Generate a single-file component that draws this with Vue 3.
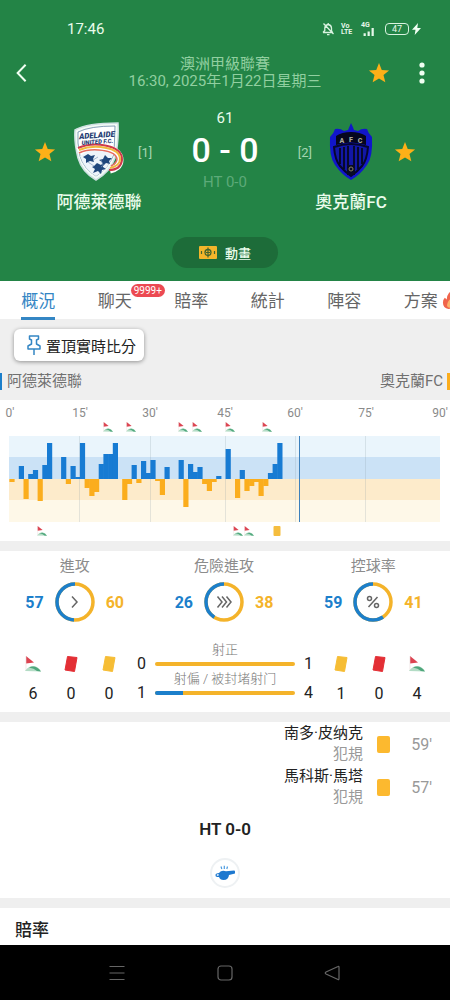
<script setup>
const starPath = 'M12 1.2 15 8.6 23 9.2 16.9 14.3 18.9 22.2 12 17.9 5.1 22.2 7.1 14.3 1 9.2 9 8.6Z'

const tabs = [
  { label: '概況', active: true },
  { label: '聊天', badge: '9999+' },
  { label: '賠率' },
  { label: '統計' },
  { label: '陣容' },
  { label: '方案', hot: true }
]

const plotWidth = 431
const step = 4.7

const ticks = [
  { label: "0'", x: 1 },
  { label: "15'", x: 71 },
  { label: "30'", x: 141 },
  { label: "45'", x: 216 },
  { label: "60'", x: 286 },
  { label: "75'", x: 357 },
  { label: "90'", x: 431 }
]

// Momentum per minute: positive for the home side, negative for the away side.
const momentum = {
  0: -3, 2: 13, 3: -20, 4: 5, 5: 9, 6: -22, 7: 14, 8: 36, 11: 22, 12: -5, 13: 13, 14: 2,
  15: 36, 16: -9, 17: -17, 18: -13, 19: 15, 20: 25, 21: 25, 22: 36, 24: -21, 25: -5,
  26: 14, 27: -4, 28: 18, 29: 6, 30: 19, 31: -2, 32: -16, 33: 12, 36: 19, 37: -28,
  38: 15, 39: 7, 40: 12, 41: -5, 42: -12, 43: -3, 44: 3, 46: 30, 48: -19, 49: 9,
  50: -12, 51: -7, 52: -3, 53: -17, 54: -7, 55: 6, 56: 15, 57: 36
}
const bars = Object.entries(momentum).map(([minute, value]) => ({
  x: Number(minute) * step + 0.4,
  y: value > 0 ? 43 - value : 43,
  h: Math.abs(value),
  home: value > 0
}))

const homeEvents = [99, 122, 174, 188, 221, 258]
const awayEvents = [
  { type: 'corner', x: 33 },
  { type: 'corner', x: 229 },
  { type: 'corner', x: 240 },
  { type: 'yellow', x: 268 }
]
const at = (x) => ({ left: (x / plotWidth) * 100 + '%' })

const circumference = 2 * Math.PI * 18
const rings = [
  { label: '進攻', home: 57, away: 60, icon: 'M17 14.5 22 20 17 25.5' },
  { label: '危險進攻', home: 26, away: 38, icon: 'M13.5 14.5 18 20 13.5 25.5M18 14.5 22.5 20 18 25.5M22.5 14.5 27 20 22.5 25.5' },
  { label: '控球率', home: 59, away: 41, icon: 'M24.5 15 15.5 25M18.5 16.5a2 2 0 1 1-4 0a2 2 0 1 1 4 0M25.5 23.5a2 2 0 1 1-4 0a2 2 0 1 1 4 0' }
]
const homeArc = (r) => (r.home / (r.home + r.away)) * circumference

const homeCounts = [
  { type: 'corner', name: '角球', n: 6 },
  { type: 'red', name: '紅牌', n: 0 },
  { type: 'yellow', name: '黃牌', n: 0 }
]
const awayCounts = [
  { type: 'yellow', name: '黃牌', n: 1 },
  { type: 'red', name: '紅牌', n: 0 },
  { type: 'corner', name: '角球', n: 4 }
]
const shots = [
  { label: '射正', home: 0, away: 1 },
  { label: '射偏 / 被封堵射门', home: 1, away: 4 }
]
const share = (s) => ({ width: (s.home / (s.home + s.away)) * 100 + '%' })

const incidents = [
  { player: '南多·皮纳克', reason: '犯規', minute: "59'" },
  { player: '馬科斯·馬塔', reason: '犯規', minute: "57'" }
]
</script>

<template>
  <div class="screen">
    <svg class="defs" aria-hidden="true">
      <symbol id="corner" viewBox="0 0 16 16">
        <path d="M1 0 9 6.5 1 7.5Z" fill="#dc4350" />
        <path d="M1 0v15" stroke="#e9d9d9" stroke-width=".6" />
        <path d="M0 15Q4 9.500 9 10Q14 11 16 15.500Z" fill="#b3dcc5" />
        <path d="M4 11.500Q11 8.500 16 15.500L12 15Q9 12 4 11.500Z" fill="#4fa77c" />
      </symbol>
      <symbol id="red" viewBox="0 0 16 16">
        <path d="M4.500.500 14 1.500 11.500 15.500 2 14Z" fill="#e32f35" stroke="#e32f35" stroke-linejoin="round" />
      </symbol>
      <symbol id="yellow" viewBox="0 0 16 16">
        <path d="M4.500.500 14 1.500 11.500 15.500 2 14Z" fill="#f6bd35" stroke="#f6bd35" stroke-linejoin="round" />
      </symbol>
    </svg>

    <header class="hero">
      <div class="status">
        <time>17:46</time>
        <div class="status-icons">
          <svg class="bell" viewBox="0 0 12 14" fill="none" stroke="#d9f3e0" stroke-width="1.3">
            <path d="M1 10.500h9.500L9.500 8.500V6Q9.300 3 6.200 2.500Q3 3 2.800 6V8.500L1 10.500M5 12.600h2.500M1.500 1.500 11.500 12M6.200 1v1.500" />
          </svg>
          <span class="volte"><b>Vo</b><b>LTE</b></span>
          <span class="signal">
            <b>4G</b>
            <svg viewBox="0 0 14 9" fill="#e6f7ea"><path d="M2 6h2.500v3H2zM6.500 4H9v5H6.500zM11 0h2.500v9H11z" /></svg>
          </span>
          <span class="battery">47</span>
          <svg class="bolt" viewBox="0 0 9 12" fill="#f2fff4"><path d="M6 0 0 6.800h3.500L2.700 12 9 5H5.300Z" /></svg>
        </div>
      </div>

      <div class="topbar">
        <button class="icon-btn back" aria-label="返回">
          <svg viewBox="0 0 12 20" fill="none" stroke="#f0fff2" stroke-width="2.2"><path d="M10.500 1 1.800 10 10.500 19" /></svg>
        </button>
        <div class="league">
          <div>澳洲甲級聯賽</div>
          <div>16:30, 2025年1月22日星期三</div>
        </div>
        <div class="actions">
          <button class="icon-btn" aria-label="收藏比賽"><svg class="star" viewBox="0 0 24 24"><path :d="starPath" /></svg></button>
          <button class="icon-btn" aria-label="更多">
            <svg class="dots" viewBox="0 0 6 22" fill="#f0fff2"><circle cx="3" cy="3" r="2.600" /><circle cx="3" cy="11" r="2.600" /><circle cx="3" cy="19" r="2.600" /></svg>
          </button>
        </div>
      </div>

      <div class="match">
        <div class="team">
          <div class="crest-row">
            <button class="icon-btn" aria-label="收藏阿德萊德聯"><svg class="star" viewBox="0 0 24 24"><path :d="starPath" /></svg></button>
            <svg class="crest" viewBox="0 0 50 60">
              <path d="M1 8Q13 1 44 1Q45 20 41 36Q36 50 22 58Q8 50 4 36Q0 20 1 8Z" fill="#f3faf6" stroke="#cfe0e2" stroke-width="1.500" />
              <path d="M4 10Q16 4 41 4L40 32Q34 47 22 54Q10 47 6 34Q3 20 4 10Z" fill="#fff" stroke="#55799b" stroke-width=".7" />
              <path d="M6 34Q22 22 39 33Q34 48 22 54Q11 48 6 34Z" fill="#eef4fa" />
              <path d="m20 44 3-3 4 2 2-2 0 4 3 2-4 1-1 4-3-3-5 2 2-4-3-2Z M9 35l5-3 3 2 4-1-2 4 1 3-4-1-4 2 0-4ZM31 33l3 3 4 0-3 3 1 3-4-1-3 3-1-4-3-2 4-1Z" fill="#20477c" />
              <path d="M14 40l6 4M24 35l-5 3M27 38l2 5M31 42l-4 3" stroke="#809ab9" stroke-width=".7" />
              <path d="M4 29C18 21 46 24 46 38C46 44 41 47 36 48" fill="none" stroke="#fff" stroke-width="7" />
              <path d="M4 26C20 19 49 23 48 38C47 45 42 48 35 48" fill="none" stroke="#cf3a4a" stroke-width="2" />
              <path d="M5 28C20 22 46 25 46 37C46 42 41 45 36 46" fill="none" stroke="#f0b83d" stroke-width="2" />
              <path d="M5 31C18 25 42 28 43 37C43 41 39 43 37 44" fill="none" stroke="#e66b5f" stroke-width="1.500" />
              <g transform="rotate(-4 22 15)" fill="#263d73" font-family="Roboto, sans-serif" font-weight="900" font-style="italic" text-anchor="middle">
                <text x="23" y="16" font-size="8">ADELAIDE</text>
                <text x="23" y="22" font-size="6">UNITED F.C.</text>
              </g>
            </svg>
            <span class="rank">[1]</span>
          </div>
          <div class="team-name">阿德萊德聯</div>
        </div>

        <div class="score-col">
          <div class="minute">61</div>
          <div class="score">0 - 0</div>
          <div class="half">HT 0-0</div>
        </div>

        <div class="team">
          <div class="crest-row">
            <span class="rank">[2]</span>
            <svg class="crest" viewBox="0 0 50 60">
              <path d="M25 1Q27 5 28 8L32 9Q36 6 41 7Q42 11 46 15Q47 35 41 43Q34 53 25 58Q16 53 9 43Q3 35 4 15Q8 11 9 7Q14 6 18 9L22 8Z" fill="#1116ca" />
              <path d="M25 10Q34 10 40 14L40 23Q25 18 10 23L10 14Q16 10 25 10Z" fill="#05061e" />
              <path d="M8 25Q25 19 42 25Q41 38 36 44Q31 50 25 54Q19 50 14 44Q9 38 8 25Z" fill="#1217a6" stroke="#05062e" stroke-width="2" />
              <path d="M14 26v16M18 25v22M22 24v24M28 24v24M32 25v22M36 26v16" stroke="#060822" stroke-width="1.800" />
              <path d="M21 43h8v10h-8z" fill="#090b26" />
              <circle cx="25" cy="47" r="2" fill="none" stroke="#8a825d" />
              <g text-anchor="middle" font-size="7" font-weight="900" font-family="Roboto, sans-serif" fill="#aaa89a">
                <text x="16" y="21">A</text>
                <text x="25" y="20">F</text>
                <text x="34" y="21">C</text>
              </g>
            </svg>
            <button class="icon-btn" aria-label="收藏奧克蘭FC"><svg class="star" viewBox="0 0 24 24"><path :d="starPath" /></svg></button>
          </div>
          <div class="team-name">奧克蘭FC</div>
        </div>
      </div>

      <button class="animate">
        <svg viewBox="0 0 18 13">
          <rect width="18" height="13" rx="1" fill="#f3b52b" />
          <circle cx="9" cy="6.500" r="3" fill="none" stroke="#43652e" stroke-width="1.300" />
          <path d="M9 1.500v10M2.500 5v3M15.500 5v3M7 6.500h4" stroke="#43652e" stroke-width="1.200" />
        </svg>
        <span>動畫</span>
      </button>
    </header>

    <nav class="tabs">
      <button v-for="t in tabs" :key="t.label" class="tab" :class="{ active: t.active }">
        <span class="tab-label">{{ t.label }}
          <span v-if="t.badge" class="badge">{{ t.badge }}</span>
          <svg v-if="t.hot" class="flame" viewBox="0 0 16 18">
            <path d="M8 0Q10 4 13 6Q16 11 13 15Q11 18 7 18Q1 17 1 11Q1 8 3 6L5 8Q5 4 8 0Z" fill="#f0644b" />
            <path d="M8 8Q12 12 11 15Q9 18 6 16Q4 13 8 8Z" fill="#fbb36b" />
          </svg>
        </span>
      </button>
    </nav>

    <main>
      <section class="pin-area">
        <button class="pin">
          <svg viewBox="0 0 14 20" fill="none" stroke="#3486c4" stroke-width="1.500" stroke-linejoin="round">
            <path d="M2.500 1h9v3L9.500 5v4l3.500 2v3H1v-3l3.500-2V5l-2-1ZM7 14v6" />
          </svg>
          <span>置頂實時比分</span>
        </button>
        <div class="legend">
          <span class="home">阿德萊德聯</span>
          <span class="away">奧克蘭FC</span>
        </div>
      </section>

      <section class="chart">
        <div class="axis"><span v-for="t in ticks" :key="t.label" :style="at(t.x)">{{ t.label }}</span></div>
        <div class="marks">
          <svg v-for="x in homeEvents" :key="x" viewBox="0 0 16 16" :style="at(x)"><use href="#corner" /></svg>
        </div>
        <svg class="plot" :viewBox="`0 0 ${plotWidth} 86`" preserveAspectRatio="none">
          <path d="M0 0h431v21H0z" fill="#eaf5fc" />
          <path d="M0 21h431v22H0z" fill="#cbe2f6" />
          <path d="M0 43h431v21H0z" fill="#fdebcb" />
          <path d="M0 64h431v22H0z" fill="#fef8e8" />
          <path d="M70.500 0v86M141.500 0v86M216.500 0v86M286.500 0v86M356.500 0v86" stroke="#8a9aa5" stroke-opacity=".22" />
          <rect v-for="b in bars" :key="b.x" :x="b.x" :y="b.y" width="5.2" :height="b.h" :fill="b.home ? '#177bd3' : '#fbad1d'" />
          <path d="M290 0h1v86h-1z" fill="#3b80bd" />
        </svg>
        <div class="marks low">
          <template v-for="e in awayEvents" :key="e.x">
            <svg v-if="e.type === 'corner'" viewBox="0 0 16 16" :style="at(e.x)"><use href="#corner" /></svg>
            <i v-else :style="at(e.x)"></i>
          </template>
        </div>
      </section>

      <section class="stats">
        <div class="rings">
          <div v-for="r in rings" :key="r.label" class="ring">
            <div class="ring-label">{{ r.label }}</div>
            <div class="ring-row">
              <b class="home-n">{{ r.home }}</b>
              <svg viewBox="0 0 40 40" fill="none">
                <circle cx="20" cy="20" r="18" stroke="#f4b32a" stroke-width="3.500" />
                <circle cx="20" cy="20" r="18" stroke="#1c7fcb" stroke-width="3.500" transform="matrix(0 -1 -1 0 40 40)" :stroke-dasharray="`${homeArc(r)} ${circumference}`" />
                <path :d="r.icon" stroke="#666" stroke-width="1.500" />
              </svg>
              <b class="away-n">{{ r.away }}</b>
            </div>
          </div>
        </div>

        <div class="totals">
          <div class="counts">
            <div v-for="c in homeCounts" :key="c.type"><svg viewBox="0 0 16 16" role="img" :aria-label="c.name"><use :href="'#' + c.type" /></svg><span>{{ c.n }}</span></div>
          </div>
          <div class="shots">
            <div v-for="s in shots" :key="s.label" class="shot">
              <span class="shot-n">{{ s.home }}</span>
              <div class="shot-mid">
                <span>{{ s.label }}</span>
                <div class="track"><div class="fill" :style="share(s)"></div></div>
              </div>
              <span class="shot-n">{{ s.away }}</span>
            </div>
          </div>
          <div class="counts">
            <div v-for="c in awayCounts" :key="c.type"><svg viewBox="0 0 16 16" role="img" :aria-label="c.name"><use :href="'#' + c.type" /></svg><span>{{ c.n }}</span></div>
          </div>
        </div>
      </section>

      <section class="incidents">
        <div v-for="i in incidents" :key="i.minute" class="incident">
          <div class="who"><div>{{ i.player }}</div><div class="why">{{ i.reason }}</div></div>
          <i class="card"></i>
          <span class="when">{{ i.minute }}</span>
        </div>
        <div class="ht">HT 0-0</div>
        <div class="whistle">
          <svg viewBox="0 0 20 16">
            <path d="M5.500 6.500Q8 5 11 6.200L19 5.500Q20 5.500 20 6.500V8.500L14 10Q13.500 15 8.500 15Q5 15 4 12H2Q0 11.500.500 9.500Q1 8 4 8Z" fill="#1d78cf" />
            <path d="M3.800 9.300H2Q1.400 10.200 2 10.800h1.500Z" fill="#fff" />
            <path d="M6 1.500 6.800 4M9.300.800V4M12.500 1.500 11.800 4" stroke="#4c9be0" stroke-width="1.200" />
          </svg>
        </div>
      </section>

      <section class="odds"><h2>賠率</h2></section>
    </main>

    <footer class="sysnav">
      <button class="icon-btn" aria-label="最近"><svg viewBox="0 0 18 18"><path d="M1.500 2.500h15M1.500 9h15M1.500 15.500h15" /></svg></button>
      <button class="icon-btn" aria-label="主頁"><svg viewBox="0 0 18 18"><rect x="2" y="2" width="14" height="14" rx="3" /></svg></button>
      <button class="icon-btn" aria-label="返回"><svg viewBox="0 0 18 18"><path d="M14 2.500Q15 2 15 3.500v11Q15 16 14 15.500L2 10Q.500 9 2 8Z" /></svg></button>
    </footer>
  </div>
</template>

<style>
body {
  background: #fff;
}
</style>

<style scoped>
.screen {
  display: flex;
  flex-direction: column;
  min-height: 100vh;
  overflow: hidden;
  font-family: Roboto, "Noto Sans CJK TC", sans-serif;
  font-size: 15px;
  color: #222;
}
.screen * {
  box-sizing: border-box;
}
button {
  margin: 0;
  padding: 0;
  border: 0;
  background: none;
  font: inherit;
  color: inherit;
}
svg {
  display: block;
  flex: none;
}
.defs {
  position: absolute;
  width: 0;
  height: 0;
}
.icon-btn {
  display: flex;
}

.hero {
  display: flex;
  flex-direction: column;
  padding-bottom: 13px;
  background: #238446;
  color: #eafcec;
}
.status {
  display: flex;
  align-items: center;
  justify-content: space-between;
  height: 54px;
  padding: 4px 29px 0 67px;
}
.status-icons {
  display: flex;
  align-items: center;
  color: #e6f7ea;
}
.bell {
  width: 12px;
  height: 14px;
  margin-right: 7px;
}
.volte {
  display: flex;
  flex-direction: column;
  width: 10px;
  margin-right: 10px;
  font-size: 7px;
  line-height: 6px;
}
.signal {
  display: flex;
  flex-direction: column;
  height: 13px;
  margin-right: 10px;
  font-size: 7px;
  line-height: 5px;
}
.signal svg {
  width: 14px;
  height: 8px;
}
.battery {
  width: 24px;
  height: 12px;
  margin-right: 3px;
  border: 1px solid #d9f3e0;
  border-radius: 4px;
  font-size: 9px;
  line-height: 10px;
  text-align: center;
}
.bolt {
  width: 9px;
  height: 12px;
}

.topbar {
  display: grid;
  grid-template-columns: 80px 1fr 71px;
  align-items: center;
  height: 37px;
  padding: 0 25px 0 16px;
}
.back svg {
  width: 11px;
  height: 20px;
}
.league {
  color: #91cfa0;
  line-height: 17px;
  text-align: center;
  white-space: nowrap;
}
.actions {
  display: flex;
  align-items: center;
  justify-content: flex-end;
  gap: 29px;
}
.star {
  width: 22px;
  height: 22px;
  fill: #fdb018;
}
.dots {
  width: 6px;
  height: 22px;
}

.match {
  display: grid;
  grid-template-columns: 130px 1fr 130px;
  padding: 17px 34px 0;
}
.team {
  display: flex;
  flex-direction: column;
  align-items: stretch;
  padding-top: 14px;
}
.crest-row {
  display: grid;
  grid-template-columns: 1fr auto 1fr;
  align-items: center;
  column-gap: 14px;
}
.crest {
  width: 50px;
  height: 60px;
}
.rank {
  font-size: 13px;
  color: #a5d5b1;
}
.team:last-child .rank {
  text-align: right;
}
.team:last-child .icon-btn {
  justify-content: flex-end;
}
.team-name {
  margin-top: 8px;
  font-size: 17px;
  line-height: 24px;
  font-weight: 500;
  text-align: center;
  white-space: nowrap;
}
.score-col {
  text-align: center;
  white-space: nowrap;
}
.minute {
  line-height: 20px;
}
.score {
  font-size: 34px;
  font-weight: 500;
  line-height: 44px;
  color: #fff;
}
.half {
  line-height: 20px;
  color: #5daa79;
}
.animate {
  display: flex;
  align-items: center;
  justify-content: center;
  align-self: center;
  gap: 8px;
  width: 106px;
  height: 31px;
  margin-top: 23px;
  border-radius: 16px;
  background: #1d6c39;
  font-size: 13px;
  font-weight: 500;
}
.animate svg {
  width: 18px;
  height: 13px;
}

.tabs {
  display: flex;
  height: 38px;
  background: #fff;
  color: #666;
}
.tab {
  display: flex;
  justify-content: center;
  flex: 0 0 17%;
  font-size: 17px;
}
.tab-label {
  position: relative;
  height: 39px;
  padding: 0;
  line-height: 41px;
  white-space: nowrap;
}
.tab.active {
  color: #3486c4;
}
.tab.active .tab-label {
  border-bottom: 3px solid #3486c4;
}
.badge {
  position: absolute;
  left: 33px;
  top: 3px;
  padding: 0 3px;
  border-radius: 7px;
  background: #ec4a52;
  color: #fff;
  font-size: 10px;
  line-height: 13px;
}
.flame {
  position: absolute;
  left: 38px;
  top: 11px;
  width: 15px;
  height: 17px;
}

.pin-area {
  padding-top: 10px;
  background: #efefef;
}
.pin {
  display: flex;
  align-items: center;
  gap: 5px;
  height: 32px;
  margin-left: 14px;
  padding: 0 8px 0 13px;
  border-radius: 6px;
  background: #fff;
  box-shadow: 0 1px 4px rgba(0, 0, 0, 0.4);
}
.pin svg {
  width: 14px;
  height: 20px;
}
.legend {
  display: flex;
  justify-content: space-between;
  padding: 12px 0 10px;
  line-height: 17px;
  color: #707070;
}
.legend .home {
  padding-left: 5px;
  border-left: 2px solid #1c7fcb;
}
.legend .away {
  padding-right: 4px;
  border-right: 3px solid #fbad1d;
}

.chart {
  padding: 5px 10px 0 9px;
  border-bottom: 10px solid #efefef;
}
.axis {
  position: relative;
  height: 16px;
  font-size: 12px;
  line-height: 16px;
  color: #8a8a8a;
}
.axis span {
  position: absolute;
  transform: translateX(-50%);
}
.marks {
  position: relative;
  height: 15px;
}
.marks.low {
  height: 19px;
}
.marks svg,
.marks i {
  position: absolute;
  top: 1px;
  width: 10px;
  height: 10px;
  transform: translateX(-50%);
}
.marks.low svg,
.marks.low i {
  top: 4px;
}
.marks i {
  width: 7px;
  border-radius: 1px;
  background: #f5bd3e;
}
.plot {
  width: 100%;
  height: 86px;
}

.stats {
  padding: 5px 0 8px;
  border-bottom: 10px solid #efefef;
}
.rings {
  display: grid;
  grid-template-columns: repeat(3, 1fr);
  padding-right: 2px;
}
.ring-label {
  line-height: 20px;
  text-align: center;
  color: #8c8c8c;
}
.ring-row {
  display: flex;
  align-items: center;
  justify-content: center;
  gap: 11px;
  margin-top: 6px;
  font-size: 16px;
}
.ring-row svg {
  width: 40px;
  height: 40px;
}
.home-n {
  color: #1c7fcb;
}
.away-n {
  color: #f4b32a;
}
.totals {
  display: grid;
  grid-template-columns: 114px 1fr 114px;
  margin-top: 18px;
  padding: 0 14px;
  font-size: 16px;
}
.counts {
  display: grid;
  grid-template-columns: repeat(3, 1fr);
  padding-top: 16px;
}
.counts div {
  display: flex;
  flex-direction: column;
  align-items: center;
  gap: 12px;
  line-height: 20px;
}
.counts svg {
  width: 16px;
  height: 16px;
}
.shot {
  display: grid;
  grid-template-columns: 27px 1fr 27px;
  align-items: end;
  height: 29px;
}
.shots .shot:first-child {
  height: 30px;
}
.shot-n {
  line-height: 12px;
  text-align: center;
}
.shot-mid {
  padding-bottom: 4px;
  font-size: 13px;
  font-weight: 300;
  line-height: 18px;
  text-align: center;
  white-space: nowrap;
  color: #777;
}
.shot-mid span {
  display: block;
  margin-bottom: 3px;
}
.track {
  height: 4px;
  overflow: hidden;
  border-radius: 2px;
  background: #f4b32a;
}
.fill {
  height: 4px;
  background: #1c7fcb;
}

.incidents {
  padding: 1px 0 10px;
  border-bottom: 10px solid #efefef;
}
.incident {
  display: flex;
  align-items: center;
  justify-content: flex-end;
  padding-right: 18px;
}
.who {
  margin-right: 14px;
  line-height: 21px;
  text-align: right;
}
.incident + .incident {
  margin-top: 1px;
}
.why {
  color: #999;
}
.card {
  width: 13px;
  height: 17px;
  border-radius: 2px;
  background: #fcb92f;
}
.when {
  width: 42px;
  font-size: 16px;
  text-align: right;
  color: #999;
}
.ht {
  margin-top: 10px;
  font-size: 17px;
  font-weight: 600;
  line-height: 22px;
  text-align: center;
}
.whistle {
  display: flex;
  align-items: center;
  justify-content: center;
  width: 30px;
  height: 30px;
  margin: 18px auto 0;
  border: 2px solid #eef1f3;
  border-radius: 50%;
}
.whistle svg {
  width: 20px;
  height: 16px;
}
.odds {
  padding: 11px 15px 4px;
}
.odds h2 {
  margin: 0;
  font-size: 17px;
  font-weight: 500;
  line-height: 22px;
}

.sysnav {
  display: flex;
  align-items: center;
  justify-content: center;
  gap: 90px;
  height: 55px;
  margin-top: auto;
  background: #000;
}
.sysnav svg {
  width: 18px;
  height: 18px;
  fill: none;
  stroke: #666;
  stroke-width: 1.2px;
}
</style>
